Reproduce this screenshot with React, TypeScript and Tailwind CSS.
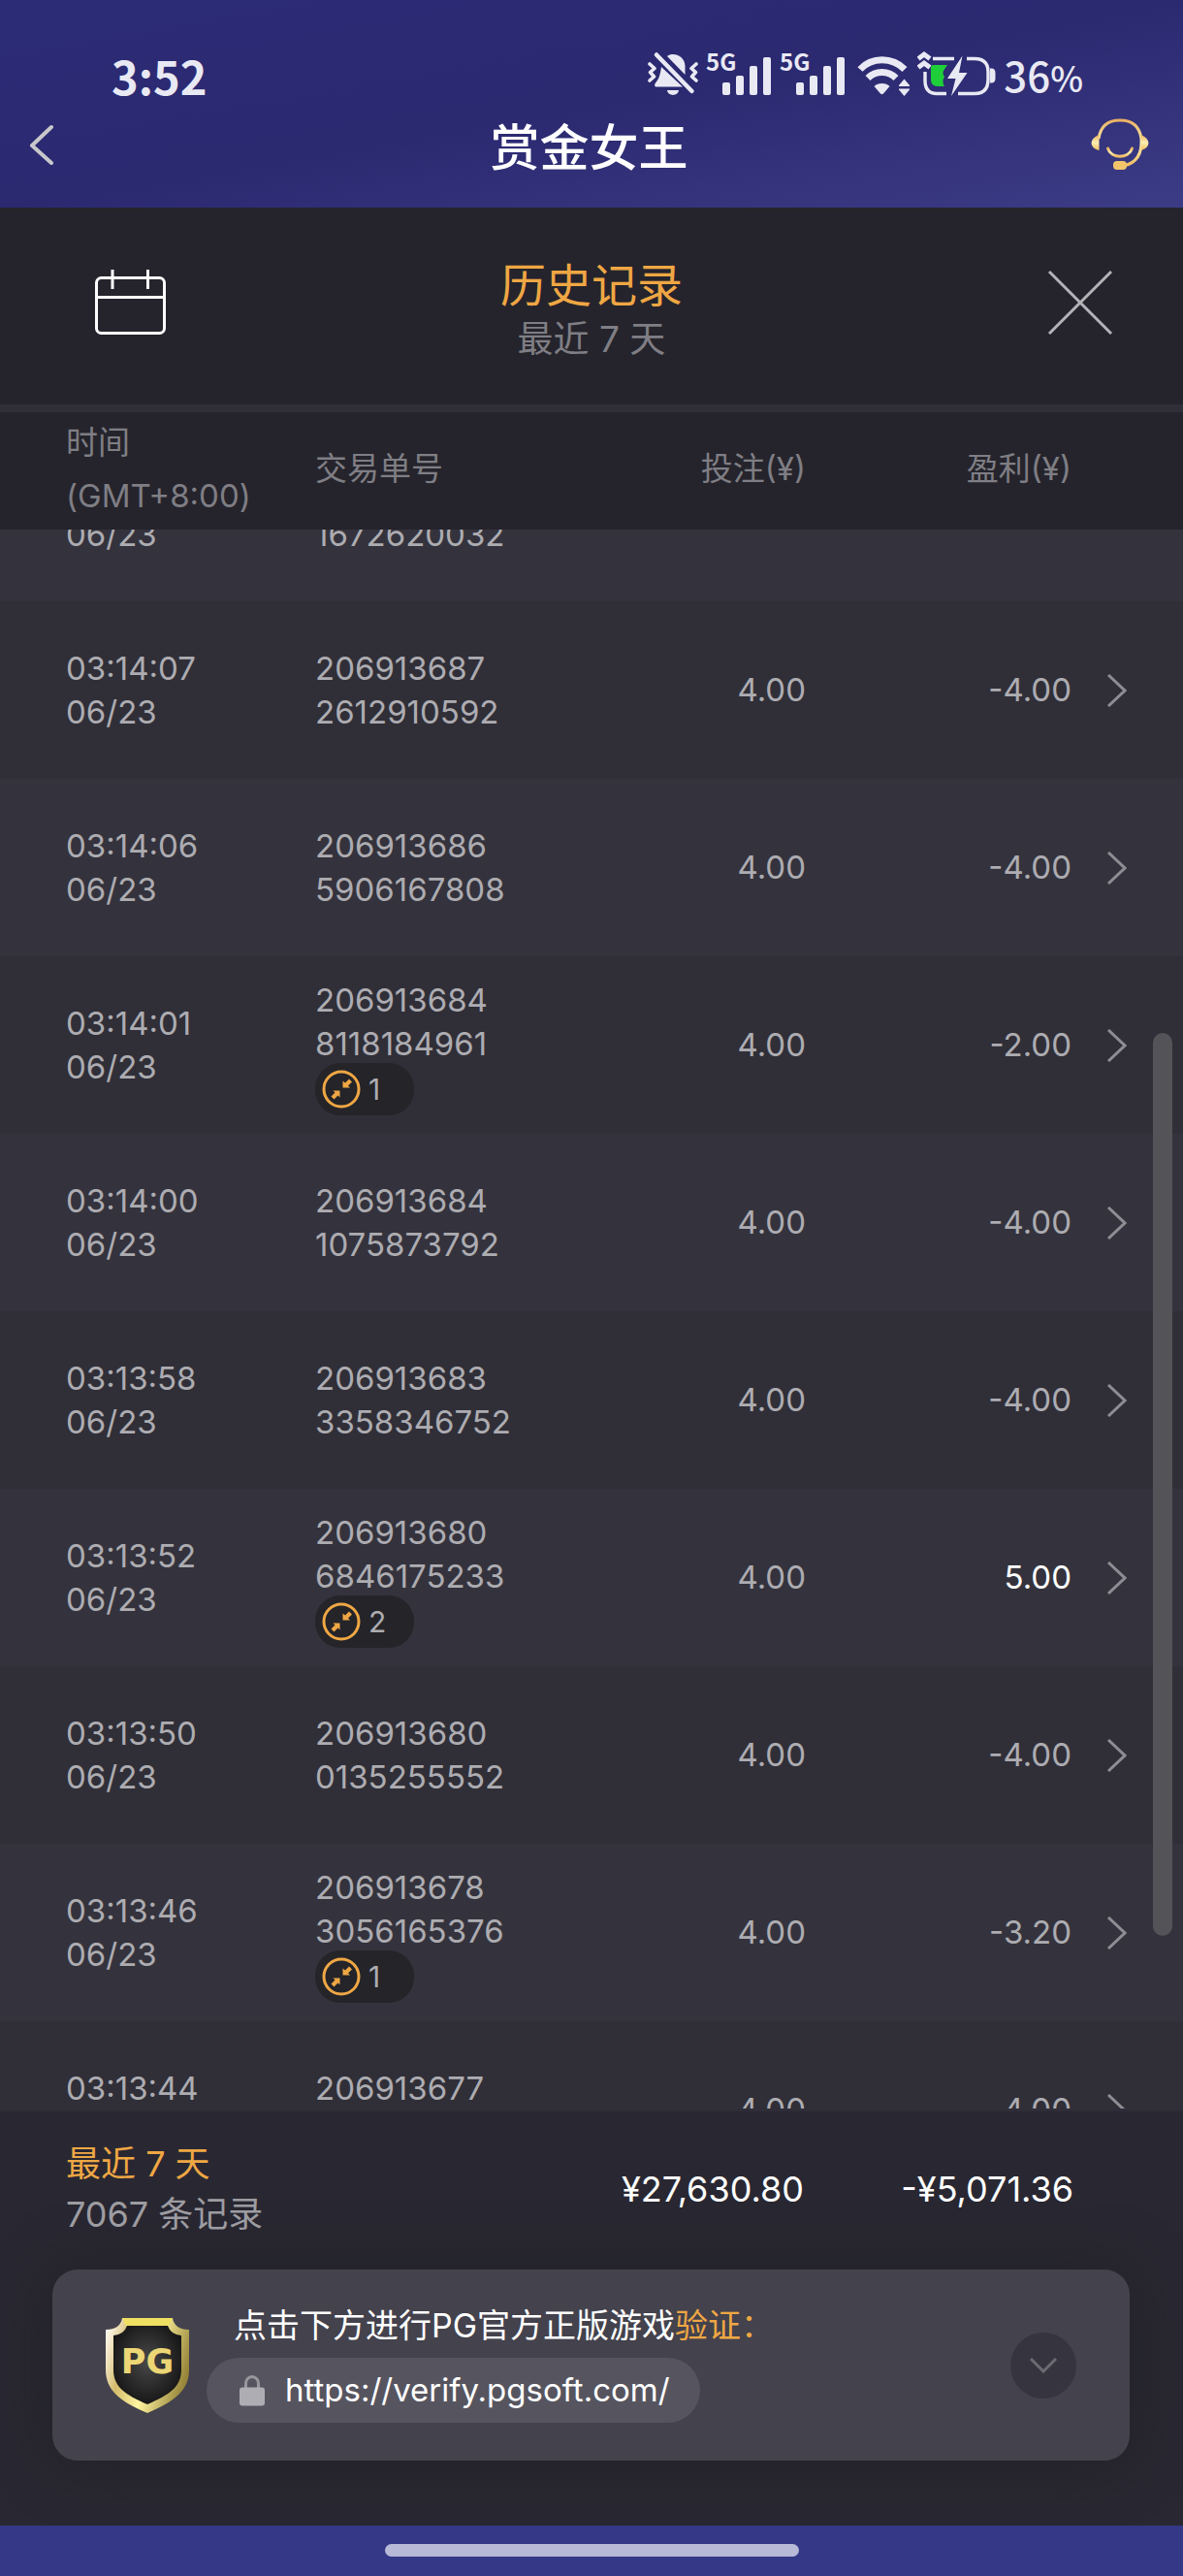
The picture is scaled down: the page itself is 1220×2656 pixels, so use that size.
import React from "react";

type Spin = {
  time: string;
  id: [string, string];
  bet: string;
  profit: string;
  count?: number;
};

const spins: Spin[] = [
  { time: "03:14:09", id: ["206913688", "1672620032"], bet: "4.00", profit: "-4.00" },
  { time: "03:14:07", id: ["206913687", "2612910592"], bet: "4.00", profit: "-4.00" },
  { time: "03:14:06", id: ["206913686", "5906167808"], bet: "4.00", profit: "-4.00" },
  { time: "03:14:01", id: ["206913684", "8118184961"], bet: "4.00", profit: "-2.00", count: 1 },
  { time: "03:14:00", id: ["206913684", "1075873792"], bet: "4.00", profit: "-4.00" },
  { time: "03:13:58", id: ["206913683", "3358346752"], bet: "4.00", profit: "-4.00" },
  { time: "03:13:52", id: ["206913680", "6846175233"], bet: "4.00", profit: "5.00", count: 2 },
  { time: "03:13:50", id: ["206913680", "0135255552"], bet: "4.00", profit: "-4.00" },
  { time: "03:13:46", id: ["206913678", "3056165376"], bet: "4.00", profit: "-3.20", count: 1 },
  { time: "03:13:44", id: ["206913677", "4286112768"], bet: "4.00", profit: "-4.00" },
];

const columns = "grid grid-cols-[257px_1fr_200px_274px_57px] items-center pl-[68px] pr-[58px]";

function MutedBell() {
  return (
    <svg width="52" height="48" viewBox="0 0 52 48" fill="#e9e9f4" aria-hidden="true">
      <path d="M20 6C26 1.500 38 5 38.500 16V25Z" />
      <path d="M14 17L36 37.500H9C6.500 37.500 7 35 8 33.500C12 29 13 24 14 17Z" />
      <path d="M20 41h12c-1 6.500-11 6.500-12 0Z" />
      <path d="M9 4.500L45.500 42" stroke="#e9e9f4" strokeWidth="4.500" strokeLinecap="round" />
      <path d="M2 14l5 4.500-4.500 4L6.500 27 2 31M50 14l-5 4.500 4.500 4L45.500 27 50 31" fill="none" stroke="#e9e9f4" strokeWidth="3.600" strokeLinejoin="round" strokeLinecap="round" />
    </svg>
  );
}

function Signal() {
  return (
    <svg width="68" height="48" viewBox="0 0 68 48" fill="#e9e9f4" role="img" aria-label="5G">
      <text x="0" y="21" fontSize="24" fontWeight="700" fontFamily="'Noto Sans CJK SC', sans-serif">5G</text>
      <rect x="17" y="33" width="8" height="13" rx="2" />
      <rect x="31" y="26" width="8" height="20" rx="2" />
      <rect x="45" y="16" width="8" height="30" rx="2" />
      <rect x="59" y="7" width="8" height="39" rx="2" />
    </svg>
  );
}

function Wifi() {
  return (
    <svg width="54" height="48" viewBox="0 0 54 48" fill="none" aria-hidden="true">
      <path d="M3 19.500C15 6.500 36 6.500 49 19.500" stroke="#e9e9f4" strokeWidth="7" />
      <path d="M11 28.500C19 20.500 32 20.500 40 28.500" stroke="#e9e9f4" strokeWidth="7" />
      <path d="M17.500 37C21 33 30 33 33.500 37L27 44.500q-1.500 1.500-3 0Z" fill="#e9e9f4" />
      <path d="M43 36L48.500 29.500 54 36v1H43ZM43 39.500H54v1L48.500 47 43 40.500Z" fill="#e9e9f4" />
    </svg>
  );
}

function Battery() {
  return (
    <svg width="81" height="48" viewBox="0 0 81 48" fill="none" aria-hidden="true">
      <path d="M14 17.500q0-2.500 3-2.500H31L27 21q-1.500 3 1 6-3 5 0 10H21q-7 0-7-7Z" fill="#1fcf3a" />
      <path d="M16 8.500H38M8 22V31Q8 44.500 20 44.500H30M51 8.500H59Q73 8.500 73 22V30Q73 44.500 59 44.500H42" stroke="#e9e9f4" strokeWidth="3.400" />
      <path d="M75 18.500h1.500q4 0 4 5v5q0 5-4 5H75Z" fill="#e9e9f4" />
      <path d="M46.500 5.500L31 29h8.500L35 47 51.500 23H43Z" fill="#e9e9f4" />
      <path d="M1 8.500L7 4l6 4.500M1 17.500L7 13l6 4.500" stroke="#e9e9f4" strokeWidth="5" />
    </svg>
  );
}

function Headset() {
  return (
    <svg width="62" height="56" viewBox="0 0 62 56" fill="none" aria-hidden="true">
      <defs>
        <linearGradient id="gold" x1="0" y1="0" x2="0" y2="1">
          <stop offset="0" stopColor="#e9b163" />
          <stop offset="0.500" stopColor="#fbeeb0" />
          <stop offset="1" stopColor="#f0bd62" />
        </linearGradient>
      </defs>
      <path d="M9 22C11 8 20 3 31 3s20 5 22 19c1 15-5 25-18 28" stroke="url(#gold)" strokeWidth="3" />
      <path d="M9.500 18C-1 22-1 31 9.500 34ZM52.500 18C63 22 63 31 52.500 34Z" fill="url(#gold)" />
      <path d="M18.500 32C22 43 40 43 43.500 32" stroke="url(#gold)" strokeWidth="3" strokeLinecap="round" />
      <rect x="24" y="45" width="14" height="9" rx="4" fill="#f3c56b" />
    </svg>
  );
}

function Calendar() {
  return (
    <svg width="74" height="68" viewBox="0 0 74 68" fill="none" stroke="#fff" strokeWidth="3" aria-hidden="true">
      <rect x="1.500" y="8.500" width="70" height="57" rx="5" />
      <path d="M2 28.500H71M18 0V20M54.500 0V20" />
    </svg>
  );
}

function CountBadge({ value }: { value: number }) {
  return (
    <span className="-mt-[3px] flex h-[54px] w-[102px] items-center gap-2 rounded-[26px] bg-[#242429] pl-[7px] text-[30px] leading-[54px] text-[#adacb1]">
      <svg width="40" height="40" viewBox="0 0 40 40" fill="none" aria-hidden="true">
        <circle cx="20" cy="20" r="18" stroke="#efa744" strokeWidth="3" />
        <path d="M21.500 18.500V11.500L24 13.500L28 9.500L31 12.500L27 16.500L29 18.500Z" fill="#efa744" />
        <path d="M18.500 21.500H11.500L13.500 23.500L9.500 27.500L12.500 30.500L16.500 26.500L18.500 28.500Z" fill="#efa744" />
      </svg>
      {value}
    </span>
  );
}

function Shield() {
  return (
    <svg width="88" height="100" viewBox="0 0 88 100" aria-hidden="true">
      <defs>
        <linearGradient id="rim" x1="0" y1="0.200" x2="1" y2="0.500">
          <stop offset="0" stopColor="#fff9ee" />
          <stop offset="0.250" stopColor="#d3bb6c" />
          <stop offset="0.550" stopColor="#fff5a0" />
          <stop offset="1" stopColor="#978539" />
        </linearGradient>
        <radialGradient id="core" cx="0.500" cy="0.450" r="0.550">
          <stop offset="0" stopColor="#494949" />
          <stop offset="1" stopColor="#171717" />
        </radialGradient>
      </defs>
      <path d="M1 13Q16 13 18 1H70Q72 13 87 13V54C87 76 72 87 44 99C16 87 1 76 1 54Z" fill="url(#rim)" />
      <path d="M18 1H70L66 9H22Z" fill="#efe062" />
      <path d="M9 19Q20 18 23 9H65Q68 18 79 19V54C79 72 67 80 44 90C21 80 9 72 9 54Z" fill="url(#core)" />
      <text x="44" y="58" textAnchor="middle" fontFamily="'DejaVu Sans', sans-serif" fontWeight="700" fontSize="35" fill="#ecd675">PG</text>
    </svg>
  );
}

export default function App() {
  return (
    <div
      lang="zh-CN"
      className="flex h-screen min-h-[1200px] flex-col overflow-hidden bg-[#292832] font-['Inter','Noto_Sans_CJK_SC',sans-serif]"
    >
      <header className="shrink-0 bg-linear-to-br from-[#2c2b76] via-[#2b2970] to-[#3c3c86] pt-[52px] pb-4 font-['Noto_Sans_CJK_SC',sans-serif]">
        <div className="flex h-12 items-center pr-[103px] pl-[115px] text-[#e9e9f4]">
          <span className="mr-auto pt-1 text-[47px] leading-[48px] font-bold">3:52</span>
          <MutedBell />
          <div className="ml-2 flex gap-2">
            <Signal />
            <Signal />
          </div>
          <div className="mr-2 ml-3 flex gap-2">
            <Wifi />
            <Battery />
          </div>
          <span className="pt-1 text-[42px] leading-[48px] font-medium">
            36<span className="text-[36px]">%</span>
          </span>
        </div>
        <div className="flex h-[98px] items-center justify-between pr-[34px] pl-[29px]">
          <button type="button" aria-label="返回" className="flex w-[62px]">
            <svg width="28" height="42" viewBox="0 0 28 42" fill="none" stroke="#c8c8cc" strokeWidth="4" strokeLinecap="round" strokeLinejoin="round">
              <path d="M24 3L4 22L24 40" />
            </svg>
          </button>
          <h1 className="text-[51px] leading-[60px] font-medium text-white">赏金女王</h1>
          <button type="button" aria-label="客服">
            <Headset />
          </button>
        </div>
      </header>

      <section className="flex h-[203px] shrink-0 items-center justify-between bg-[#25242c] pr-[72px] pb-2 pl-[98px]">
        <button type="button" aria-label="选择日期">
          <Calendar />
        </button>
        <div className="flex flex-col items-center pt-[18px]">
          <h2 className="text-[47px] leading-[58px] text-[#efa744]">历史记录</h2>
          <p className="text-[37px] leading-[54px] text-[#7f7e84]">最近 7 天</p>
        </div>
        <button type="button" aria-label="关闭" className="flex w-[100px] justify-end">
          <svg width="68" height="68" viewBox="0 0 68 68" fill="none" stroke="#b4b3b7" strokeWidth="3">
            <path d="M2 2L66 66M66 2L2 66" />
          </svg>
        </button>
      </section>

      <div className="h-2 shrink-0 bg-[#302f39]" />

      <div className="relative flex min-h-0 flex-1 flex-col">
        <table className="flex min-h-0 flex-1 flex-col text-[33px]">
          <thead className="block bg-[#25242c] text-[#7f7e84]">
            <tr className={columns + " h-[121px] pb-1"}>
              <th scope="col" className="text-left leading-[55px] font-normal">
                时间
                <br />
                (GMT+8:00)
              </th>
              <th scope="col" className="text-left font-normal">交易单号</th>
              <th scope="col" className="text-right font-normal">投注(¥)</th>
              <th scope="col" className="text-right font-normal">盈利(¥)</th>
              <th scope="col"><span className="sr-only">详情</span></th>
            </tr>
          </thead>
          <tbody className="block min-h-0 flex-1 overflow-hidden leading-[45px] text-[#adacb1]">
            {spins.map((s) => (
              <tr key={s.time} className={columns + " h-[183px] odd:bg-[#34333d] even:bg-[#302f38] first:-mt-[109px]"}>
                <td>
                  {s.time}
                  <br />
                  06/23
                </td>
                <td className={s.count ? "pt-[3px]" : ""}>
                  {s.id[0]}
                  <br />
                  {s.id[1]}
                  {s.count && <CountBadge value={s.count} />}
                </td>
                <td className="text-right">{s.bet}</td>
                <td className={s.profit.startsWith("-") ? "text-right" : "text-right text-white"}>{s.profit}</td>
                <td className="flex justify-end">
                  <button type="button" aria-label="查看详情">
                    <svg width="20" height="34" viewBox="0 0 20 34" fill="none" stroke="#8e8d93" strokeWidth="3">
                      <path d="M1 1L18 17L1 33" />
                    </svg>
                  </button>
                </td>
              </tr>
            ))}
          </tbody>
        </table>
        <div className="absolute top-[640px] right-[11px] bottom-[178px] w-5 rounded-full bg-[#545357]" />
      </div>

      <footer className="shrink-0 border-t-[3px] border-[#2f2e38] bg-[#292832]">
        <div className="grid h-[163px] grid-cols-[257px_1fr_278px] items-center pr-[113px] pb-1 pl-[68px] text-[36px]">
          <div className="leading-[52px] whitespace-nowrap">
            <p className="text-[#efa744]">最近 7 天</p>
            <p className="text-[#9d9ca1]">7067 条记录</p>
          </div>
          <p className="text-right text-white">¥27,630.80</p>
          <p className="text-right text-white">-¥5,071.36</p>
        </div>

        <div className="mr-[55px] mb-[67px] ml-[54px] flex h-[197px] items-center rounded-[26px] bg-[#43424d] pr-[55px] pl-[54px] shadow-[0_0_60px_rgba(28,28,34,0.6)]">
          <Shield />
          <div className="ml-[17px] flex flex-col gap-[10px] pb-1">
            <p className="pl-7 text-[34px] leading-[46px] text-white">
              点击下方进行PG官方正版游戏<span className="text-[#efa744]">验证：</span>
            </p>
            <a
              href="https://verify.pgsoft.com/"
              className="flex h-[67px] items-center gap-[21px] self-start rounded-full bg-[#56555f] pr-[31px] pl-[34px] text-[33px] leading-[67px] text-white"
            >
              <svg width="26" height="32" viewBox="0 0 26 32" aria-hidden="true">
                <path d="M6.500 14V8.500a6.500 7 0 0 1 13 0V14" fill="none" stroke="#98979e" strokeWidth="3" />
                <rect y="12.500" width="26" height="19" rx="3" fill="#aeadb3" />
              </svg>
              https://verify.pgsoft.com/
            </a>
          </div>
          <button type="button" aria-label="展开" className="ml-auto flex size-[68px] items-center justify-center rounded-full bg-[#36353f]">
            <svg width="28" height="18" viewBox="0 0 28 18" fill="none" stroke="#6c6b73" strokeWidth="3">
              <path d="M1 2L14 15L27 2" />
            </svg>
          </button>
        </div>
      </footer>

      <div className="flex h-[52px] shrink-0 justify-center bg-[#353787] pt-[19px]">
        <div className="h-[13px] w-[35%] rounded-full bg-[#b8b8d7]" />
      </div>
    </div>
  );
}
